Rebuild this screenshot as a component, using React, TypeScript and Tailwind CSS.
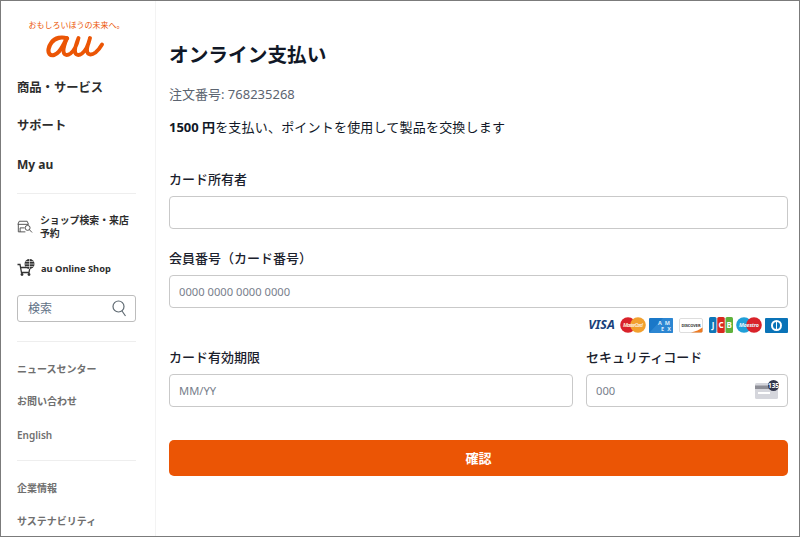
import React from "react";

const font = { fontFamily: '"Noto Sans", "Noto Sans CJK JP", sans-serif' };

function AuLogo() {
  return (
    <svg width="58" height="24" viewBox="0 0 58 24" fill="none">
      {/* bowl of the a */}
      <path
        d="M21 4.500C16 2.500 9 3.500 5.500 8.500 2.500 12.500 1.500 17.500 3.500 20c2.500 2.500 6.500 1 9.500-2.500C16 14 18.500 9 20.500 4.500"
        stroke="#eb5505"
        strokeWidth="4.200"
        strokeLinecap="round"
      />
      {/* stem of the a and the u with its tail */}
      <path
        d="M21 4c-2 5-3.500 9-3.500 12.500 0 5 3.500 5.500 7 3 4-3 6.500-9 8-15.500-2 5-3.500 9-3.500 12.500 0 5 3.500 5.500 7 3 4-3 6.500-9 8-15.500-1.500 5-3 9-3 12 0 5.500 4.500 5.500 8.500 2.500 2.500-2 4.500-4.500 6.500-8"
        stroke="#eb5505"
        strokeWidth="3.800"
        strokeLinecap="round"
        strokeLinejoin="round"
      />
    </svg>
  );
}

function ShopIcon() {
  return (
    <svg width="18" height="14" viewBox="0 0 18 14" fill="none" stroke="#444" strokeWidth="1">
      <path d="M2.500 .5h9l1.500 3.500H1z" />
      <path d="M1.500 4v8.500h8M12 4v.5" />
      <path d="M3.500 12.500V8h5" />
      <circle cx="12" cy="8" r="2.800" />
      <path d="M14 10l3 3.200" />
    </svg>
  );
}

function CartIcon() {
  return (
    <svg width="18" height="18" viewBox="0 0 18 18" fill="none">
      <path d="M0.500 5.500h2.500l1.500 8h7.500l1-5H3.500" stroke="#333" strokeWidth="1.300" />
      <circle cx="5" cy="15.500" r="1.400" fill="#333" />
      <circle cx="12" cy="15.500" r="1.400" fill="#333" />
      <circle cx="12.500" cy="5" r="5" fill="#333" />
      <path d="M7.500 5h10M12.500 0v10M8.500 2.500h8M8.500 7.500h8" stroke="#fff" strokeWidth="0.600" />
    </svg>
  );
}

function VisaLogo() {
  return (
    <span className="w-[29px] text-center text-[12.500px] leading-[14px] font-bold italic text-[#1a3f7a]">
      VISA
    </span>
  );
}

function TwoCircles({ left, right, name, color }: { left: string; right: string; name: string; color: string }) {
  return (
    <svg width="26" height="16" viewBox="0 0 26 16">
      <circle cx="8" cy="8" r="7.800" fill={left} />
      <circle cx="18" cy="8" r="7.800" fill={right} />
      <text x="13" y="9.800" textAnchor="middle" fontSize="5.500" fontWeight="700" fontStyle="italic" fill={color} textLength="20">
        {name}
      </text>
    </svg>
  );
}

function AmexLogo() {
  return (
    <svg width="24" height="15" viewBox="0 0 24 15">
      <rect width="24" height="15" rx="1" fill="#1a78c8" />
      <path d="M0 15L14 0h10v15z" fill="#3d93dc" opacity="0.500" />
      <text x="15" y="6.500" textAnchor="middle" fontSize="5.500" fontWeight="700" fill="#dcecf9" textLength="12">
        AM
      </text>
      <text x="17" y="13" textAnchor="middle" fontSize="5.500" fontWeight="700" fill="#dcecf9" textLength="10">
        EX
      </text>
    </svg>
  );
}

function DiscoverLogo() {
  return (
    <svg width="24" height="15" viewBox="0 0 24 15">
      <rect x="0.500" y="0.500" width="23" height="14" rx="1.500" fill="#fff" stroke="#dddddd" />
      <path d="M12 14.500c5-1 8.500-3 11.500-5v4l-1 1z" fill="#ee7b22" />
      <text x="12" y="9" textAnchor="middle" fontSize="4" fontWeight="700" fill="#333" textLength="19">
        DISCOVER
      </text>
    </svg>
  );
}

function JcbLogo() {
  return (
    <svg width="24" height="16" viewBox="0 0 24 16">
      <rect x="0" width="7.500" height="16" rx="1.500" fill="#0f76b8" />
      <rect x="8.250" width="7.500" height="16" rx="1.500" fill="#d8291f" />
      <rect x="16.500" width="7.500" height="16" rx="1.500" fill="#5fb13c" />
      <text x="4" y="11" textAnchor="middle" fontSize="8" fontWeight="700" fill="#fff">J</text>
      <text x="12" y="11" textAnchor="middle" fontSize="8" fontWeight="700" fill="#fff">C</text>
      <text x="20.250" y="11" textAnchor="middle" fontSize="8" fontWeight="700" fill="#fff">B</text>
    </svg>
  );
}

function DinersLogo() {
  return (
    <svg width="23" height="15" viewBox="0 0 23 15">
      <rect width="23" height="15" rx="1" fill="#0a73b7" />
      <circle cx="11.500" cy="7.500" r="5.500" fill="#fff" />
      <circle cx="11.500" cy="7.500" r="3.500" fill="#0a73b7" />
      <rect x="11" y="3" width="1" height="9" fill="#fff" />
    </svg>
  );
}

function CvcIcon() {
  return (
    <svg width="25" height="19" viewBox="0 0 25 19">
      <rect x="0" y="3" width="23" height="16" rx="1.500" fill="#d5d6dc" />
      <rect x="0" y="5.500" width="23" height="3.500" fill="#8d8e96" />
      <rect x="3" y="12" width="12" height="2" fill="#fff" />
      <circle cx="18.500" cy="5.500" r="5.500" fill="#33364a" />
      <text x="18.500" y="7.800" textAnchor="middle" fontSize="6.500" fontWeight="700" fill="#fff">
        135
      </text>
    </svg>
  );
}

function SearchIcon() {
  return (
    <svg width="15" height="17" viewBox="0 0 15 17" fill="none" stroke="#5f6a72" strokeWidth="1.200">
      <circle cx="6.500" cy="6.500" r="5.500" />
      <path d="M10 11l3.500 5" />
    </svg>
  );
}

function Field({
  label,
  placeholder,
  children,
}: {
  label: string;
  placeholder?: string;
  children?: React.ReactNode;
}) {
  return (
    <div className="flex flex-col">
      <label className="h-[18px] text-[13px] leading-[17px] font-medium text-[#1a202c]">{label}</label>
      <div className="relative mt-[7px]">
        <input
          readOnly
          placeholder={placeholder}
          style={font}
          className="block h-[33px] w-full rounded-[4px] border border-[#c9c9c9] bg-white px-[9px] text-[11.200px] outline-none placeholder:text-[#78808c]"
        />
        {children}
      </div>
    </div>
  );
}

export default function App() {
  return (
    <div
      style={font}
      className="flex h-[537px] w-[800px] overflow-hidden border border-[#7b7b7b] bg-white"
    >
      {/* Sidebar */}
      <aside className="flex h-full w-[155px] shrink-0 flex-col overflow-hidden border-r border-[#f3f3f3] pr-[19px] pl-[16px]">
        <div className="mt-[19px] flex flex-col items-center">
          <span className="h-[10px] text-[8px] leading-[10px] whitespace-nowrap text-[#eb5505]">
            おもしろいほうの未来へ。
          </span>
          <div className="mt-[4px] mr-[4px]">
            <AuLogo />
          </div>
        </div>

        <nav className="mt-[21px] flex flex-col gap-[21px] text-[12.300px] leading-[18px] font-bold text-[#2d2d2d]">
          <a className="mb-[-1px]">商品・サービス</a>
          <a>サポート</a>
          <a className="text-[12px]">My au</a>
        </nav>

        <div className="mt-[19px] h-px bg-[#eeeeee]" />

        <div className="mt-[20px] flex items-center gap-[7px]">
          <ShopIcon />
          <span className="text-[9.900px] leading-[13px] font-bold text-[#2d2d2d]">
            ショップ検索・来店予約
          </span>
        </div>
        <div className="mt-[19px] flex items-center gap-[6px]">
          <CartIcon />
          <span className="text-[9.300px] leading-[13px] font-bold text-[#2d2d2d]">au Online Shop</span>
        </div>

        <div className="mt-[18px] flex h-[27px] items-center justify-between rounded-[3px] border border-[#bdbdbd] pr-[8px] pl-[10px]">
          <span className="text-[12px] leading-[20px] text-[#5f7186]">検索</span>
          <SearchIcon />
        </div>

        <div className="mt-[19px] h-px bg-[#eeeeee]" />

        <div className="mt-[19px] flex flex-col gap-[16px] text-[10px] leading-[17px] font-semibold text-[#6f6f6f]">
          <a className="mb-[-1px]">ニュースセンター</a>
          <a className="mb-[1px]">お問い合わせ</a>
          <a>English</a>
        </div>

        <div className="mt-[16px] h-px bg-[#eeeeee]" />

        <div className="mt-[19px] flex flex-col gap-[16px] text-[10px] leading-[17px] font-semibold text-[#6f6f6f]">
          <a>企業情報</a>
          <a>サステナビリティ</a>
        </div>
      </aside>

      {/* Main */}
      <main className="flex-1 pt-[40px] pr-[11px] pl-[13px]">
        <h1 className="h-[28px] text-[19.700px] leading-[28px] font-bold text-[#111827]">オンライン支払い</h1>
        <p className="mt-[16px] text-[13px] leading-[18px] text-[#5c6470]">注文番号: 768235268</p>
        <p className="mt-[15px] text-[13px] leading-[18px] tracking-[0.2px] text-[#111827]">
          <span className="font-bold tracking-normal">1500 円</span>を支払い、ポイントを使用して製品を交換します
        </p>

        <div className="mt-[35px]">
          <Field label="カード所有者" />
        </div>
        <div className="mt-[21px]">
          <Field label="会員番号（カード番号）" placeholder="0000 0000 0000 0000" />
        </div>

        <div className="mt-[9px] flex h-[16px] items-center justify-end">
          <VisaLogo />
          <span className="ml-[4px]">
            <TwoCircles left="#d9222a" right="#f2a02e" name="MasterCard" color="#fbe3c8" />
          </span>
          <span className="ml-[3px]">
            <AmexLogo />
          </span>
          <span className="ml-[6px]">
            <DiscoverLogo />
          </span>
          <span className="ml-[6px]">
            <JcbLogo />
          </span>
          <span className="ml-[3px]">
            <TwoCircles left="#1f9fd8" right="#d9222a" name="Maestro" color="#e8f4fb" />
          </span>
          <span className="ml-[3px]">
            <DinersLogo />
          </span>
        </div>

        <div className="mt-[16px] flex gap-[13px]">
          <div className="w-[404px]">
            <Field label="カード有効期限" placeholder="MM/YY" />
          </div>
          <div className="flex-1">
            <Field label="セキュリティコード" placeholder="000">
              <span className="absolute top-[6px] right-[8px]">
                <CvcIcon />
              </span>
            </Field>
          </div>
        </div>

        <button className="mt-[33px] h-[36px] w-full rounded-[5px] bg-[#eb5505] pt-[1px] text-[13px] font-bold text-white">
          確認
        </button>
      </main>
    </div>
  );
}
